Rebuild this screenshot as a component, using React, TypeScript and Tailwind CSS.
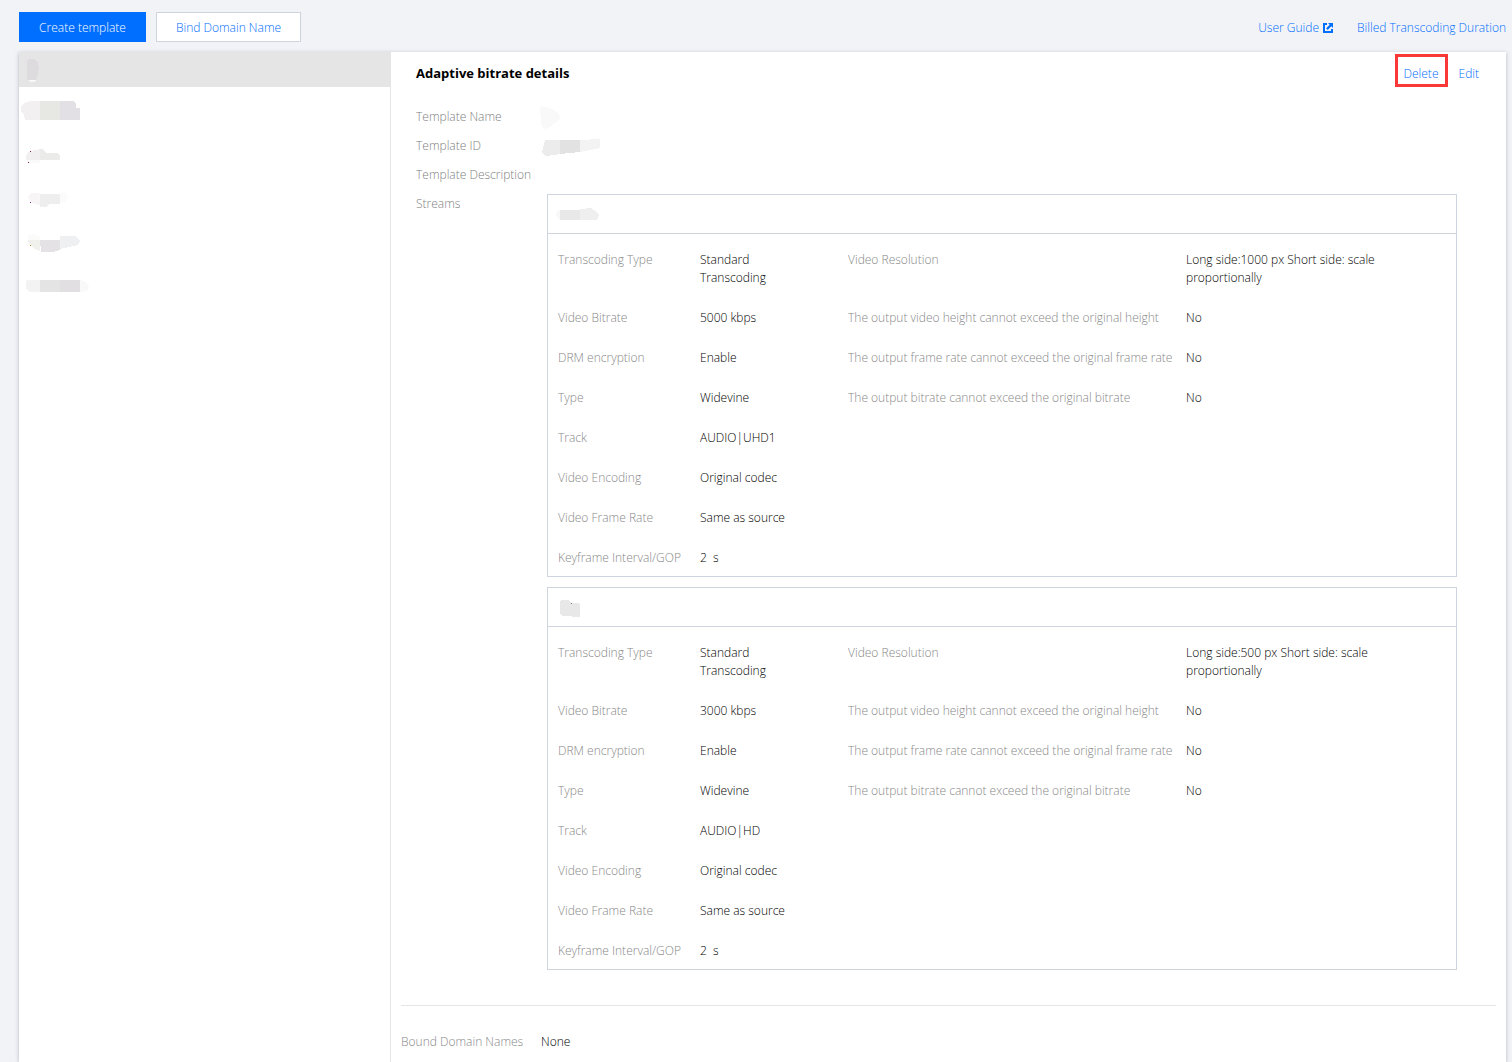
import { ReactNode } from 'react';
import { clsx } from 'clsx';

interface Shape {
  points: string;
  fill: string;
}

interface MaskProps {
  width: number;
  height: number;
  shapes: Shape[];
}

interface Field {
  label: string;
  value: string;
}

interface Stream {
  name: MaskProps;
  output: Field[];
  limits: Field[];
}

// Names and ids are masked, each one is drawn as a pale patch
function Mask({ width, height, shapes }: MaskProps) {
  return (
    <svg width={width} height={height} viewBox={`0 0 ${width} ${height}`} className="block" aria-hidden="true">
      {shapes.map((shape, index) => (
        <polygon key={index} points={shape.points} fill={shape.fill} shapeRendering="crispEdges" />
      ))}
    </svg>
  );
}

const selectedTemplate: Shape[] = [
  { points: '8,8 11,7 16,7 19,11 20,16 18,25 17,28 8,28', fill: '#dddbde' },
  { points: '9,28 17,28 15,30 11,30', fill: '#f8f8f8' },
];

const templates: Shape[][] = [
  [
    { points: '2,17 5,14 12,12 21,12 21,31 6,31 5,26 2,22', fill: '#f2f0f1' },
    { points: '21,12 41,12 41,31 21,31', fill: '#e7e8e3' },
    { points: '41,12 54,12 57,15 57,19 61,19 61,30 60,31 41,31', fill: '#e2e0e4' },
  ],
  [
    { points: '7,24 9,20 16,18 21,17 21,28 7,28', fill: '#f1eff0' },
    { points: '21,17 24,17 27,21 38,21 41,24 41,28 21,28', fill: '#ebebea' },
    { points: '8,28 21,28 21,31 9,31', fill: '#fbfafb' },
    { points: '11,19 12,19 12,20 11,20', fill: '#8a1c30' },
    { points: '9,30 10,30 10,31 9,31', fill: '#8a1c1c' },
  ],
  [
    { points: '9,21 12,18 18,18 21,19 21,30 15,29 10,25', fill: '#f7f5f6' },
    { points: '21,19 41,19 41,29 30,29 27,32 21,32', fill: '#eeeeef' },
    { points: '41,18 46,17 49,21 47,27 41,28', fill: '#fbfbfb' },
    { points: '11,27 12,27 12,28 11,28', fill: '#8c1a96' },
  ],
  [
    { points: '9,18 14,16 21,18 22,22 9,22', fill: '#fbfbfa' },
    { points: '9,22 21,22 21,33 14,30 10,26', fill: '#f0f0ed' },
    { points: '21,22 41,22 41,32 34,34 22,34', fill: '#e4e2e5' },
    { points: '41,18 57,18 61,23 59,27 41,31', fill: '#eef0f2' },
    { points: '11,27 12,27 12,28 11,28', fill: '#a8842c' },
  ],
  [
    { points: '8,19 21,19 21,31 10,31 7,27 7,22', fill: '#f3f3f3' },
    { points: '21,19 41,19 41,31 21,31', fill: '#e4e4e4' },
    { points: '41,19 61,19 61,31 41,31', fill: '#e1dfe2' },
    { points: '61,19 67,21 70,25 68,30 61,31', fill: '#f9f9f9' },
  ],
];

const templateName: Shape[] = [{ points: '0,4 10,6 19,11 20,17 10,25 4,27 1,22', fill: '#f9f9f9' }];

const templateId: Shape[] = [
  { points: '2,21 5,9 20,9 20,23 6,25 2,22', fill: '#ececec' },
  { points: '20,9 40,9 40,21 20,23', fill: '#e2e2e2' },
  { points: '40,9 60,8 60,17 55,18 40,21', fill: '#f3f3f3' },
];

const streams: Stream[] = [
  {
    name: {
      width: 60,
      height: 38,
      shapes: [
        { points: '12,15 9,16 8,20 10,24 12,25', fill: '#f8f8f8' },
        { points: '12,15 32,15 32,25 12,25', fill: '#e8e8e8' },
        { points: '32,14 43,13 48,16 51,20 49,25 32,25', fill: '#efefef' },
      ],
    },
    output: [
      { label: 'Transcoding Type', value: 'Standard Transcoding' },
      { label: 'Video Bitrate', value: '5000 kbps' },
      { label: 'DRM encryption', value: 'Enable' },
      { label: 'Type', value: 'Widevine' },
      { label: 'Track', value: 'AUDIO|UHD1' },
      { label: 'Video Encoding', value: 'Original codec' },
      { label: 'Video Frame Rate', value: 'Same as source' },
      { label: 'Keyframe Interval/GOP', value: '2  s' },
    ],
    limits: [
      { label: 'Video Resolution', value: 'Long side:1000 px Short side: scale proportionally' },
      { label: 'The output video height cannot exceed the original height', value: 'No' },
      { label: 'The output frame rate cannot exceed the original frame rate', value: 'No' },
      { label: 'The output bitrate cannot exceed the original bitrate', value: 'No' },
    ],
  },
  {
    name: {
      width: 60,
      height: 38,
      shapes: [
        { points: '12,13 14,12 20,12 23,15 30,15 32,17 32,29 24,29 24,28 14,28 12,26', fill: '#e8e8e8' },
        { points: '23,15 24,15 24,16 23,16', fill: '#777777' },
      ],
    },
    output: [
      { label: 'Transcoding Type', value: 'Standard Transcoding' },
      { label: 'Video Bitrate', value: '3000 kbps' },
      { label: 'DRM encryption', value: 'Enable' },
      { label: 'Type', value: 'Widevine' },
      { label: 'Track', value: 'AUDIO|HD' },
      { label: 'Video Encoding', value: 'Original codec' },
      { label: 'Video Frame Rate', value: 'Same as source' },
      { label: 'Keyframe Interval/GOP', value: '2  s' },
    ],
    limits: [
      { label: 'Video Resolution', value: 'Long side:500 px Short side: scale proportionally' },
      { label: 'The output video height cannot exceed the original height', value: 'No' },
      { label: 'The output frame rate cannot exceed the original frame rate', value: 'No' },
      { label: 'The output bitrate cannot exceed the original bitrate', value: 'No' },
    ],
  },
];

function ExternalIcon() {
  return (
    <svg width="10" height="10" viewBox="0 0 10 10" aria-hidden="true">
      <path d="M0 0h4v2H2v6h6V6h2v4H0z" fill="#006eff" />
      <path d="M5 0h5v5L8.300 3.300 4.700 6.900 3.100 5.300 6.700 1.700z" fill="#006eff" />
    </svg>
  );
}

function FieldList({ fields, wide }: { fields: Field[]; wide?: boolean }) {
  return (
    <dl className="flex flex-col gap-[22px]">
      {fields.map((field) => (
        <div key={field.label} className="flex">
          <dt className={clsx('shrink-0 text-[#888888]', wide ? 'w-[338px]' : 'w-[142px]')}>{field.label}</dt>
          <dd className={clsx('whitespace-pre-wrap', wide ? 'w-[200px]' : 'w-[100px]')}>{field.value}</dd>
        </div>
      ))}
    </dl>
  );
}

function StreamCard({ stream }: { stream: Stream }) {
  return (
    <section className="border border-[#cfd5de]">
      <header className="border-b border-[#cfd5de]">
        <Mask {...stream.name} />
      </header>
      <div className="flex px-[10px] pt-[17px] pb-[9px]">
        <div className="w-[290px] shrink-0">
          <FieldList fields={stream.output} />
        </div>
        <FieldList fields={stream.limits} wide />
      </div>
    </section>
  );
}

function DetailRow({ label, children }: { label: string; children?: ReactNode }) {
  return (
    <div className="flex min-h-[29px]">
      <div className="w-[124px] shrink-0 leading-[29px] text-[#808080]">{label}</div>
      <div className="min-w-0 flex-1">{children}</div>
    </div>
  );
}

export default function App() {
  return (
    <div className="flex min-h-screen flex-col bg-[#f2f3f7] pr-[6px] pl-[19px] font-['Open_Sans','Noto_Sans',sans-serif] text-[12px] leading-[18px] font-light text-black">
      <div className="flex items-center justify-between pt-[12px] pb-[10px]">
        <div className="flex gap-[10px]">
          <button className="h-[30px] w-[127px] bg-[#006eff] pt-[2px] text-white">Create template</button>
          <button className="h-[30px] w-[145px] border border-[#cfd5de] bg-white pt-[2px] text-[#006eff]">
            Bind Domain Name
          </button>
        </div>
        <nav className="flex gap-6 pt-[2px] text-[#006eff]">
          <a href="#guide" className="flex items-center gap-1">
            User Guide
            <ExternalIcon />
          </a>
          <a href="#billing">Billed Transcoding Duration</a>
        </nav>
      </div>

      <div className="flex flex-1 bg-white shadow-[0_1px_4px_rgba(54,58,80,0.32)]">
        <aside className="w-[372px] shrink-0 border-r border-[#e5e5e5]">
          <ul>
            <li className="mb-[2px] bg-[#e5e5e5]">
              <Mask width={80} height={35} shapes={selectedTemplate} />
            </li>
            {templates.map((shapes, index) => (
              <li key={index}>
                <Mask width={80} height={43} shapes={shapes} />
              </li>
            ))}
          </ul>
        </aside>

        <main className="min-w-0 flex-1">
          <header className="flex h-[50px] items-start justify-between pt-[2px] pr-[27px] pl-[25px]">
            <h1 className="text-[13px] leading-[38px] font-bold">Adaptive bitrate details</h1>
            <div className="flex items-start gap-[11px] text-[#006eff]">
              <button className="h-[33px] w-[53px] border-3 border-[#fb3838] pt-[6px]">Delete</button>
              <button className="leading-[40px]">Edit</button>
            </div>
          </header>

          <div className="pr-[49px] pl-[25px]">
            <DetailRow label="Template Name">
              <Mask width={80} height={29} shapes={templateName} />
            </DetailRow>
            <DetailRow label="Template ID">
              <Mask width={80} height={29} shapes={templateId} />
            </DetailRow>
            <DetailRow label="Template Description" />
            <DetailRow label="Streams">
              <div className="flex flex-col gap-[10px] pt-[5px] pl-[7px]">
                {streams.map((stream, index) => (
                  <StreamCard key={index} stream={stream} />
                ))}
              </div>
            </DetailRow>
          </div>

          <div className="mx-[10px] mt-[35px] flex border-t border-[#e5e5e5] pt-[27px]">
            <div className="w-[140px] text-[#888888]">Bound Domain Names</div>
            <div>None</div>
          </div>
        </main>
      </div>
    </div>
  );
}
